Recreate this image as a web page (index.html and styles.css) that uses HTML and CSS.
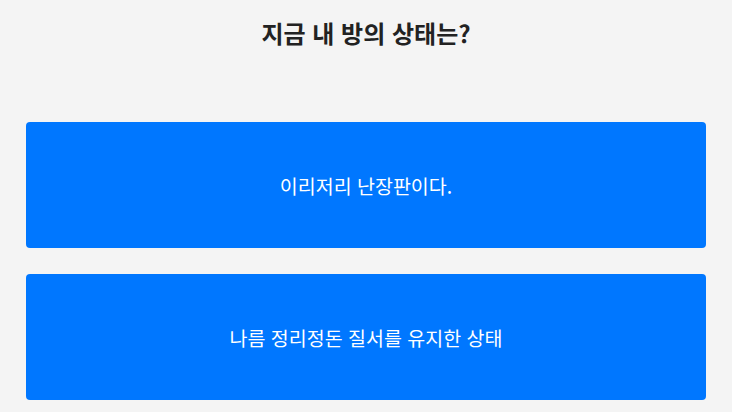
FILE: index.html
```html
<!DOCTYPE html>
<html lang="ko">
    <head>
        <meta charset="UTF-8" />
        <title>방 상태 테스트</title>
        <meta name="viewport" content="width=device-width, initial-scale=1.0" />
        <link rel="stylesheet" href="styles.css">
    </head>
    <body>
        <div class="container">
            <h1 class="question">지금 내 방의 상태는?</h1>

            <div class="answers">
                <button class="answer-btn">이리저리 난장판이다.</button>
                <button class="answer-btn">나름 정리정돈 질서를 유지한 상태</button>
            </div>
        </div>
    </body>
</html>
```

FILE: styles.css
```css
* {
    margin: 0;
    padding: 0;
    box-sizing: border-box;
}

body {
    font-family: "Noto Sans CJK KR", "Noto Sans", sans-serif;
    background: #f4f4f4;
    color: #222;
}

.container {
    padding: 18px 26px 0;
}

.question {
    font-size: 24px;
    font-weight: 700;
    line-height: 30px;
    text-align: center;
    margin-bottom: 74px;
}

.answers {
    display: flex;
    flex-direction: column;
    gap: 26px;
}

.answer-btn {
    width: 100%;
    height: 126px;
    background: #0077ff;
    color: #fff;
    border: none;
    border-radius: 4px;
    font-family: inherit;
    font-size: 19.5px;
    cursor: pointer;
}
```
